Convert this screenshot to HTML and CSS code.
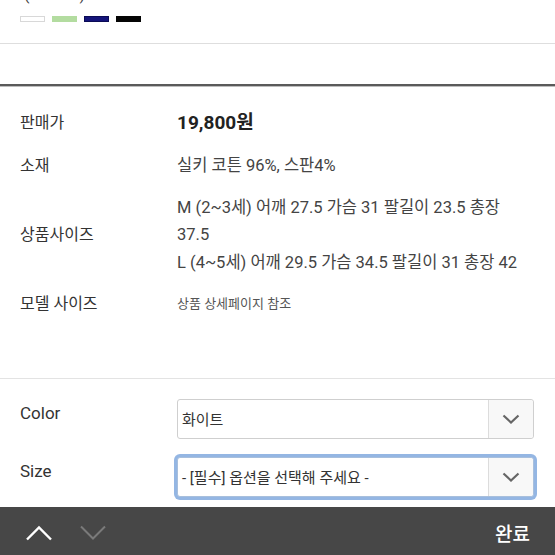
FILE: index.html
```html
<!DOCTYPE html>
<html lang="ko">
<head>
<meta charset="utf-8">
<link rel="stylesheet" href="styles.css">
</head>
<body>
<div class="page">
  <section class="top">
    <div class="cut">(<span class="cut-gap">블랙</span>)</div>
    <div class="swatches">
      <span class="sw sw-white"></span>
      <span class="sw sw-green"></span>
      <span class="sw sw-navy"></span>
      <span class="sw sw-black"></span>
    </div>
  </section>
  <div class="thick"></div>
  <section class="info">
    <div class="row">
      <div class="label">판매가</div>
      <div class="value price">19,800원</div>
    </div>
    <div class="row">
      <div class="label">소재</div>
      <div class="value">실키 코튼 96%, 스판4%</div>
    </div>
    <div class="row row-mid">
      <div class="label">상품사이즈</div>
      <div class="value">M (2~3세) 어깨 27.5 가슴 31 팔길이 23.5 총장 37.5<br>L (4~5세) 어깨 29.5 가슴 34.5 팔길이 31 총장 42</div>
    </div>
    <div class="row">
      <div class="label">모델 사이즈</div>
      <div class="value small">상품 상세페이지 참조</div>
    </div>
  </section>
  <section class="options">
    <div class="opt">
      <div class="opt-label">Color</div>
      <div class="select">
        <span class="sel-text">화이트</span>
        <span class="sel-arrow"><svg width="18" height="10" viewBox="0 0 18 10"><path d="M1.5 1.5 L9 8.5 L16.5 1.5" fill="none" stroke="#666" stroke-width="2.2"/></svg></span>
      </div>
    </div>
    <div class="opt">
      <div class="opt-label">Size</div>
      <div class="select focus">
        <span class="sel-text">- [필수] 옵션을 선택해 주세요 -</span>
        <span class="sel-arrow"><svg width="18" height="10" viewBox="0 0 18 10"><path d="M1.5 1.5 L9 8.5 L16.5 1.5" fill="none" stroke="#666" stroke-width="2.2"/></svg></span>
      </div>
    </div>
  </section>
</div>
<div class="bar">
  <div class="nav">
    <svg class="nav-up" width="28" height="16" viewBox="0 0 28 16"><path d="M2 14.5 L14 2.5 L26 14.5" fill="none" stroke="#fff" stroke-width="2.4"/></svg>
    <svg class="nav-down" width="28" height="16" viewBox="0 0 28 16"><path d="M2 1.5 L14 13.5 L26 1.5" fill="none" stroke="#7a7a7a" stroke-width="2"/></svg>
  </div>
  <div class="done">완료</div>
</div>
</body>
</html>
```

FILE: styles.css
```css
* { box-sizing: border-box; }
html, body { margin: 0; padding: 0; background: #fff; overflow: hidden; }
body {
  font-family: Roboto, "Noto Sans CJK KR", "Noto Sans", sans-serif;
  color: #333;
  height: 555px;
}
.top {
  display: flow-root;
  border-bottom: 1px solid #dedede;
  padding: 0 0 0 20px;
  height: 44px;
}
.cut {
  font-size: 16px;
  line-height: 20px;
  margin-top: -15px;
  color: #444;
  padding-left: 4px;
}
.cut-gap { display: inline-block; width: 50px; color: transparent; }
.swatches {
  display: flex;
  gap: 7px;
  margin-top: 11px;
}
.sw { display: block; width: 25px; height: 6px; }
.sw-white { background: #fff; border: 1px solid #d8d8d8; }
.sw-green { background: #b3dca0; }
.sw-navy { background: #14147a; border: 1px solid #0b0b55; }
.sw-black { background: #050505; }
.thick {
  margin-top: 40px;
  height: 3px;
  background: #5a5a5a;
  border-bottom: 1px solid #bdbdbd;
}
.info {
  padding-top: 14px;
  border-bottom: 1px solid #e3e3e3;
  padding-bottom: 53px;
}
.row {
  display: grid;
  grid-template-columns: 177px 1fr;
  align-items: center;
  padding: 7px 0;
  line-height: 27.5px;
}
.label {
  padding-left: 20px;
  font-size: 16px;
  color: #333;
}
.value {
  font-size: 16.5px;
  color: #444;
  padding-right: 28px;
}
.price {
  font-size: 19px;
  font-weight: 700;
  color: #222;
  line-height: 30px;
}
.value.small { font-size: 13px; color: #555; }
.options {
  padding-top: 20px;
}
.opt {
  display: grid;
  grid-template-columns: 177px 357px;
  align-items: start;
  margin-bottom: 18px;
}
.opt-label {
  padding-left: 20px;
  font-size: 17px;
  line-height: 20px;
  padding-top: 4px;
  color: #333;
}
.select {
  display: flex;
  height: 40px;
  border: 1px solid #cfcfcf;
  border-radius: 3px;
  background: #fff;
}
.select.focus {
  box-shadow: 0 0 0 3px #94b6e3;
  border-color: #a8bfdc;
}
.sel-text {
  flex: 1;
  font-size: 15px;
  line-height: 40px;
  padding-left: 4px;
  color: #333;
}
.sel-arrow {
  width: 45px;
  border-left: 1px solid #dcdcdc;
  background: #f8f8f8;
  display: flex;
  align-items: center;
  justify-content: center;
  border-radius: 0 3px 3px 0;
}
.bar {
  position: fixed;
  left: 0;
  right: 0;
  bottom: 0;
  height: 48px;
  background: #474747;
  display: flex;
  align-items: center;
  justify-content: space-between;
  padding: 0 25px 0 25px;
}
.nav { display: flex; gap: 26px; align-items: center; margin-top: 4px; }
.done {
  color: #fff;
  font-size: 19px;
  font-weight: 500;
  margin-top: 3px;
}
```
